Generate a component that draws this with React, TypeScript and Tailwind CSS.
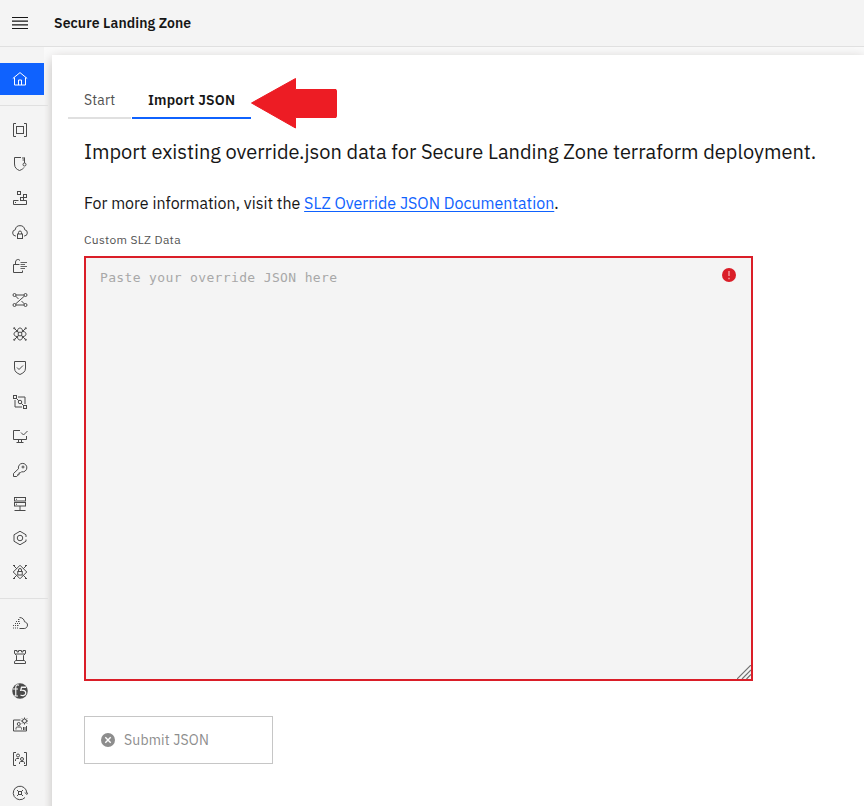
import React from "react";

type Glyph = React.ReactNode;

function Icon({ children, className = "text-[#4a4a4a]" }: { children: Glyph; className?: string }) {
  return (
    <svg
      viewBox="0 0 32 32"
      width="16"
      height="16"
      fill="none"
      stroke="currentColor"
      strokeWidth="2"
      className={"block shrink-0 " + className}
    >
      {children}
    </svg>
  );
}

const home = (
  <>
    <path d="M1.600 15 16 3.200 30.400 15M5 13v15h22V13M13 28V18h6v10" />
  </>
);

const groups = (
  <>
    <path d="M8 3H3v26h5M24 3h5v26h-5" />
    <rect x="9" y="9" width="14" height="14" />
  </>
);

const secretShield = (
  <>
    <path d="M18 3H5v13c0 8 5 11 10 13 5-2 8-4 9-6" />
    <path d="M25 3v11M25 4h-5M25 8h-4" />
    <circle cx="25" cy="17" r="3" />
  </>
);

const storage = (
  <>
    <path d="M13 21H3v8h26v-8h-6" />
    <rect x="11" y="3" width="6" height="6" />
    <rect x="17" y="15" width="6" height="6" />
    <rect x="23" y="9" width="6" height="6" />
    <path d="M6 25h2" />
  </>
);

const cloudLock = (
  <>
    <path d="M8 24h-.5A6.300 6.300 0 0 1 6.500 11.500a9.600 9.600 0 0 1 19 0A6.300 6.300 0 0 1 24.500 24H24" />
    <rect x="11" y="20" width="10" height="9" />
    <path d="M13 20v-3a3 3 0 0 1 6 0v3" />
  </>
);

const unlock = (
  <>
    <path d="M21 25v4H3V13h12M7 13V8a5 5 0 0 1 9-3" />
    <path d="M17 9h13M17 13h9M17 17h13M17 21h9" strokeWidth="1.700" />
  </>
);

const gateway = (
  <>
    <path d="M8 6h16M8 26h16M25 8 7 24M7 8l6 6M19 18l6 6" />
    <circle cx="5" cy="6" r="3" />
    <circle cx="27" cy="6" r="3" />
    <circle cx="5" cy="26" r="3" />
    <circle cx="27" cy="26" r="3" />
  </>
);

const transit = (
  <>
    <rect x="12.500" y="12.500" width="7" height="7" />
    <path d="m5 5 7.500 7.500M27 5l-7.500 7.500M5 27l7.500-7.500M27 27l-7.500-7.500" />
    <path d="M11 10c0-8 10-8 10 0M11 22c0 8 10 8 10 0M10 11c-8 0-8 10 0 10M22 11c8 0 8 10 0 10" />
    <circle cx="4.500" cy="4.500" r="1.300" />
    <circle cx="27.500" cy="4.500" r="1.300" />
    <circle cx="4.500" cy="27.500" r="1.300" />
    <circle cx="27.500" cy="27.500" r="1.300" />
  </>
);

const security = (
  <>
    <path d="M5 3h22v13c0 8-5 10-11 13C10 26 5 24 5 16Z" />
    <path d="m10 15 4 4 8-8" />
  </>
);

const vpe = (
  <>
    <rect x="3" y="3" width="6" height="6" />
    <rect x="23" y="23" width="6" height="6" />
    <path d="M12 6h14v14M6 12v14h14" />
    <circle cx="16" cy="16" r="3.500" />
    <path d="m9 9 4.500 4.500M18.500 18.500 23 23" />
  </>
);

const clusterCheck = (
  <>
    <path d="M16 5H3v18h26v-7M9 29h14M13 23v6M19 23v6" />
    <path d="m18 9 5 5 8-8" />
  </>
);

const password = (
  <>
    <path d="M13 13.500a8.500 8.500 0 1 1 6 6l-3 3-2-1v4h-3v2l-1.500 1.500H3V23Z" />
    <circle cx="22" cy="10" r="2" />
  </>
);

const serverRack = (
  <>
    <rect x="5" y="3" width="22" height="7" />
    <rect x="5" y="13" width="22" height="7" />
    <path d="M16 20v8M5 29h22M8 6.500h2M8 16.500h2" />
  </>
);

const hexagon = (
  <>
    <path d="M28 14V9.500L16 2.500 4 9.500v13l12 7 12-7V19" />
    <circle cx="16" cy="16" r="5.500" />
  </>
);

const vpn = (
  <>
    <path d="m16 2.500 13.500 13.500L16 29.500 2.500 16ZM3 3l6.500 6.500M29 3l-6.500 6.500M3 29l6.500-6.500M29 29l-6.500-6.500" />
    <rect x="11.500" y="15" width="9" height="7" />
    <path d="M13 15v-3a3 3 0 0 1 6 0v3" />
    <path d="M2 3h4M26 3h4M2 29h4M26 29h4" />
  </>
);

const cloudDots = (
  <>
    <path d="M15 5c6 0 9.500 4 10 8.500 4 1 6 3.500 6 6.500 0 4-3 7-6.500 7H15" />
    <path d="M12 9h3M8 13h2M12 13h3M6 17h2M10 17h2M14 17h2M2 21h2M6 21h2M10 21h3M2 26h2M6 26h2M10 26h2" />
  </>
);

const chessRook = (
  <>
    <path d="M5 3h5v3h3V3h6v3h3V3h5v6l-4 4v9l4 3v4H5v-4l4-3v-9L5 9ZM6 10h20M8 23h16" />
  </>
);

const f5 = (
  <>
    <circle cx="16" cy="16" r="15.500" fill="currentColor" stroke="none" />
    <path d="M14 4.500c-5-2-6.500 1-6.500 5V25M2 12h10M4 26h8" stroke="#f4f4f4" strokeWidth="2.400" />
    <path
      d="M28 8.500h-9l-1.500 6c7-.5 10.500 2 10 6-.5 4.500-6 6-10.500 3.500"
      stroke="#f4f4f4"
      strokeWidth="2.600"
    />
  </>
);

const userSettings = (
  <>
    <path d="M17 6H3v22h26V18M8 25v-2c0-2 1-3 3-3h5c2 0 3 1 3 3v2M23 20v6M26 20v6" />
    <circle cx="13.500" cy="14" r="3" />
    <circle cx="25" cy="8" r="4" />
    <path d="M25 1v3M25 12v3M18 8h3M29 8h3M20 3l2 2M28 11l2 2M30 3l-2 2M22 11l-2 2" />
  </>
);

const accessGroup = (
  <>
    <path d="M8 3H3v26h5M24 3h5v26h-5" />
    <circle cx="12" cy="9" r="3" />
    <circle cx="20" cy="16" r="3" />
    <path d="M7 20v-2c0-2 1-3 3-3h4M15 26v-2c0-2 1-3 3-3h4c2 0 3 1 3 3v2" />
  </>
);

const orbit = (
  <>
    <path d="M26 25A13.500 13.500 0 1 1 29.500 16M26 15l3.500 4 2.500-4" />
    <rect x="13" y="13" width="6" height="6" />
    <path d="m10 10 3 3M22 10l-3 3M10 22l3-3M22 22l-3-3" />
  </>
);

const primary: Glyph[] = [
  groups,
  secretShield,
  storage,
  cloudLock,
  unlock,
  gateway,
  transit,
  security,
  vpe,
  clusterCheck,
  password,
  serverRack,
  hexagon,
  vpn,
];

const secondary: Glyph[] = [cloudDots, chessRook, f5, userSettings, accessGroup, orbit];

function NavList({ items }: { items: Glyph[] }) {
  return (
    <ul>
      {items.map((glyph, i) => (
        <li key={i} className="flex h-[34px] items-center pl-3">
          <Icon>{glyph}</Icon>
        </li>
      ))}
    </ul>
  );
}

function Header() {
  return (
    <header className="flex h-[47px] shrink-0 items-center border-b border-[#e0e0e0] bg-[#f4f4f4] pl-3">
      <svg viewBox="0 0 16 12" width="16" height="12" className="block text-[#161616]" stroke="currentColor">
        <path d="M0 .5h16M0 11.500h16" />
        <path d="M0 4.200h16M0 7.800h16" strokeWidth="1.200" />
      </svg>
      <span className="ml-[26px] text-[14px] font-semibold tracking-[0.1px] text-[#161616]">
        Secure Landing Zone
      </span>
    </header>
  );
}

function Sidebar() {
  return (
    <nav className="z-10 w-11 shrink-0 bg-[#f4f4f4] pt-4">
      <div className="flex h-8 items-center bg-[#0f62fe] pl-3">
        <Icon className="text-white">{home}</Icon>
      </div>
      <div className="mt-[10px] mb-[7px] h-px w-12 bg-[#e0e0e0]" />
      <NavList items={primary} />
      <div className="mt-[9px] mb-[7px] h-px w-12 bg-[#e0e0e0]" />
      <NavList items={secondary} />
    </nav>
  );
}

function Arrow() {
  return (
    <svg viewBox="0 0 88 52" width="88" height="52" className="-ml-px mt-[22px] block">
      <path
        d="M1.500 26 45.500 1.500v11h40.500l.5 1v26l-.5 1H45.500v10.500Z"
        fill="#ed1c24"
        stroke="#ed1c24"
        strokeLinejoin="round"
      />
    </svg>
  );
}

export default function App() {
  return (
    <div
      className="flex h-[806px] w-full flex-col overflow-hidden bg-white text-[#161616]"
      style={{ fontFamily: '"IBM Plex Sans", Roboto, "Liberation Sans", sans-serif' }}
    >
      <Header />
      <div className="flex min-h-0 flex-1 overflow-hidden">
        <Sidebar />
        <div className="min-w-0 flex-1 overflow-hidden bg-[#fafafa] pt-2 pl-2">
          <main className="h-[900px] bg-white pl-4 shadow-[0_4px_12px_rgba(30,20,10,0.26)]">
            <div className="flex h-[76px]">
              <div className="flex h-16 items-end">
                <div className="flex h-10 w-[63px] items-center border-b-2 border-[#e0e0e0] pt-1 pl-4">
                  <span className="text-[14px] tracking-[0.16px] text-[#525252]">Start</span>
                </div>
                <div className="ml-px flex h-10 w-[119px] items-center border-b-2 border-[#0f62fe] pt-1 pl-4">
                  <span className="text-[14px] font-semibold whitespace-nowrap tracking-[0.2px]">Import JSON</span>
                </div>
              </div>
              <Arrow />
            </div>
            <div className="pl-4">
              <h1 className="mt-[7px] h-7 text-[20px] leading-7 whitespace-nowrap">
                Import existing override.json data for Secure Landing Zone terraform deployment.
              </h1>
              <p className="mt-[25px] h-6 text-[16px] leading-6 whitespace-nowrap">
                For more information, visit the{" "}
                <a className="text-[#0f62fe] underline underline-offset-2">SLZ Override JSON Documentation</a>.
              </p>
              <label className="mt-[17px] block h-4 text-[12px] leading-4 tracking-[0.32px] text-[#525252]">
                Custom SLZ Data
              </label>
              <div className="mt-2 flex h-[425px] w-[669px] flex-col justify-between border-2 border-[#da1e28] bg-[#f4f4f4]">
                <div className="flex items-start justify-between pt-[9px] pr-[15px] pl-[14px]">
                  <span
                    className="pt-px text-[13px] leading-5 tracking-[0.36px] text-[#a8a8a8]"
                    style={{ fontFamily: '"DejaVu Sans Mono", monospace' }}
                  >
                    Paste your override JSON here
                  </span>
                  <svg viewBox="0 0 14 14" width="14" height="14" className="mt-px block">
                    <circle cx="7" cy="7" r="7" fill="#da1e28" />
                    <path d="M7 3v5M7 9.700v1.500" stroke="#f08a90" strokeWidth="1.700" />
                  </svg>
                </div>
                <svg viewBox="0 0 14 14" width="14" height="14" className="block self-end" stroke="#6f6f6f">
                  <path d="M0 14 14 0M5 14l9-9M9.500 14 14 9.500" strokeWidth="1.200" />
                </svg>
              </div>
              <button className="mt-[35px] flex h-12 w-[189px] items-center border border-[#c6c6c6] bg-white pl-4 text-[#8d8d8d]">
                <svg viewBox="0 0 14 14" width="14" height="14" className="block">
                  <circle cx="7" cy="7" r="7" fill="currentColor" />
                  <path d="m4.300 4.300 5.400 5.400M9.700 4.300 4.300 9.700" stroke="white" strokeWidth="1.400" />
                </svg>
                <span className="ml-[9px] text-[14px] tracking-[0.16px]">Submit JSON</span>
              </button>
            </div>
          </main>
        </div>
      </div>
    </div>
  );
}
